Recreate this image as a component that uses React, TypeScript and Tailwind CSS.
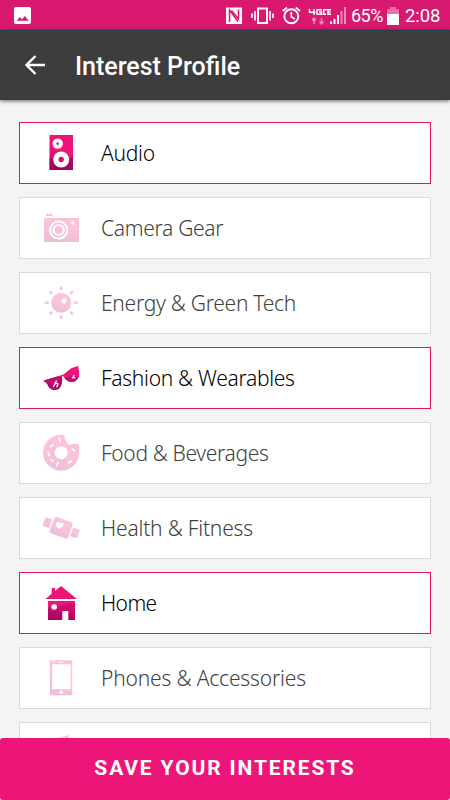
import type { ReactNode } from 'react';

type Interest = {
  name: string;
  icon: ReactNode;
  selected?: boolean;
  tracking?: string;
};

const fill = 'url(#pink)';

const AudioIcon = (
  <>
    <path fill={fill} d="M8.500 2h23.500v35H8.500z" />
    <path fill="#8f0055" opacity=".55" d="M8.500 25L20 29L32 24v13H8.500z" />
    <circle cx="16.700" cy="10.600" r="5.200" fill="#fff" />
    <path fill="#ed1578" d="M16.200 9h1v1.200h1.200v1h-1.200v1.200h-1v-1.200H15v-1h1.200z" />
    <circle cx="20.200" cy="26.500" r="8" fill="#fff" />
    <circle cx="20.200" cy="26.500" r="2.700" fill="#d40f70" />
  </>
);

const CameraIcon = (
  <>
    <path fill={fill} d="M5 5.700h6.500v2.200H5zM3 10h35v24H3z" />
    <circle cx="17.700" cy="22" r="8.600" fill="none" stroke="#fff" strokeWidth="2" />
    <circle cx="17.700" cy="22" r="5" fill="none" stroke="#fff" strokeWidth="2.200" />
    <circle cx="31.900" cy="15" r="1.700" fill="#fff" />
  </>
);

const EnergyIcon = (
  <>
    <circle cx="20.200" cy="19.700" r="10" fill={fill} />
    <circle cx="23" cy="18" r="2.500" fill="#fff" />
    <circle cx="25.200" cy="15.800" r=".8" fill="#fff" />
    <g fill="none" stroke="#ed1578" strokeWidth="2.600" strokeLinecap="round">
      <path d="M20.200 4.300v1.800M20.200 33.300v1.800M4.800 19.700h1.800M33.800 19.700h1.800" />
      <path d="M9.300 8.800l1.200 1.200M29.900 29.400l1.200 1.200M9.300 30.600l1.200-1.200M29.900 10l1.200-1.200" />
    </g>
  </>
);

const FashionIcon = (
  <>
    <path fill="#b4006b" d="M2.500 22.500L17 18.300C18.300 18 19.500 17.800 20.800 17.500C21.500 22 21.300 27.500 18.600 30.200C15.500 32.800 11.500 32.500 8.800 30.200C7 28.500 6.800 26.500 5.500 25.200C4.500 24.300 3 24 2.500 22.500Z" />
    <path fill="#d00f74" d="M4 22L17 18.300C18.300 18 19.500 17.800 20.800 17.500L21 20.500L7 26C6.500 25 4 24 4 22Z" opacity=".6" />
    <path fill="#ed1578" d="M19 17.600C23.500 17 25.500 13.500 29 11.300C31.500 9.600 34.500 8.700 37.300 7.800C36.800 10 38.300 12.300 38.300 15C38.300 19.500 35.800 23.500 31.500 24C27.500 24.300 24.500 22 22.800 18.700C21.500 17.800 20.500 18.500 19.500 19.500Z" />
    <path fill="#c60b72" d="M23.200 19.500L38 17.500C36.800 21.500 34.500 23.700 31.500 24C28.300 24.300 25.200 22.700 23.200 19.500Z" />
    <path d="M15.600 22.500L12.200 29M13.500 26.500c2-1.800 4-1.400 3.200.4l-1 2.300M33.200 17l-1.400 2.800M31 20.200l1.800-.8 1.700.6" fill="none" stroke="#fff" strokeWidth="1.300" />
  </>
);

const FoodIcon = (
  <>
    <path fill={fill} d="M23.700 2A18 18 0 1 0 38 17.500C38.300 15.500 38.100 13.500 37.600 11.500C35.500 10.300 34 10.300 32 11C30.500 11.900 28.500 12 27.300 11.300C26.300 10.700 26.400 9.500 25.600 8.700C24 7.200 23.200 4.800 23.700 2Z" />
    <circle cx="20.200" cy="19.700" r="6.500" fill="#fff" />
    <path d="M18.300 5.500l.8 3M9.500 13.600l2.600-1.600M7 19.500l1.200 2.900M9.700 26.500l2.200 1.600M17 29.500l-1.200 3M27.500 29.700l2.700-1.700M31.200 15.800l2.300 1.900" fill="none" stroke="#fff" strokeWidth="1.700" strokeLinecap="round" />
  </>
);

const HealthIcon = (
  <>
    <g fill={fill} transform="translate(20.200 19.800) rotate(20)">
      <rect x="-9.800" y="-8.700" width="19.600" height="17.400" rx="2.800" />
      <rect x="-18.300" y="-4.700" width="7" height="9" rx=".6" />
      <rect x="11.300" y="-4.400" width="7" height="9" rx=".6" />
    </g>
    <path fill="#fff" d="M17.800 20.800C15.600 19.500 14.300 17.200 15.100 15.300C16 13.500 18.100 13.600 18.900 15.400C20.500 14.100 22.500 14.800 22.500 16.600C22.300 18.800 20 20.200 17.800 20.800Z" />
  </>
);

const HomeIcon = (
  <>
    <path fill="#ed1578" d="M4.500 16L10.700 10.800V5H14v3L20 3L36 16Z" />
    <path fill={fill} d="M7 18h27v19H7z" />
    <path fill="#8f0055" opacity=".35" d="M7 25L34 20v17H7z" />
    <circle cx="13.200" cy="24" r="2.800" fill="#fff" />
    <path fill="#fff" d="M21.300 28h6v9.500h-6z" />
  </>
);

const PhoneIcon = (
  <>
    <rect x="9" y="2.300" width="22.300" height="35" rx=".5" fill={fill} />
    <path fill="#fff" d="M11.200 6.200h18.600v25H11.200zM18 3.700h4v1h-4zM12 3.500h1.400v1.400H12z" />
    <circle cx="20.100" cy="34.300" r="1.700" fill="#fff" />
  </>
);

const interests: Interest[] = [
  { name: 'Audio', icon: AudioIcon, selected: true, tracking: 'tracking-[-0.25px]' },
  { name: 'Camera Gear', icon: CameraIcon, tracking: 'tracking-[-0.3px]' },
  { name: 'Energy & Green Tech', icon: EnergyIcon, tracking: 'tracking-[-0.27px]' },
  { name: 'Fashion & Wearables', icon: FashionIcon, selected: true, tracking: 'tracking-[-0.3px]' },
  { name: 'Food & Beverages', icon: FoodIcon, tracking: 'tracking-[-0.34px]' },
  { name: 'Health & Fitness', icon: HealthIcon, tracking: 'tracking-[-0.2px]' },
  { name: 'Home', icon: HomeIcon, selected: true, tracking: 'tracking-[-0.6px]' },
  { name: 'Phones & Accessories', icon: PhoneIcon, tracking: 'tracking-[-0.17px]' },
  { name: '', icon: <path fill={fill} d="M17 5L27.500 2v18H17z" /> },
];

function InterestCard({ name, icon, selected, tracking }: Interest) {
  return (
    <button
      className={`flex h-[62px] w-full shrink-0 items-center border bg-white pl-[21px] text-left ${
        selected ? 'border-[#df1564]' : 'border-[#d9d9d9]'
      }`}
    >
      <svg viewBox="0 0 40 40" className={`size-10 shrink-0 ${selected ? '' : 'opacity-25'}`}>
        {icon}
      </svg>
      <span
        className={`ml-5 whitespace-nowrap text-[21px] leading-none font-[350] ${tracking ?? ''} ${
          selected ? 'text-black' : 'text-[#404040]'
        }`}
      >
        {name}
      </span>
    </button>
  );
}

function StatusBar() {
  return (
    <div className="flex h-[30px] shrink-0 items-center bg-[#d9186f] font-[Roboto,sans-serif] text-white">
      <svg viewBox="0 0 18 18" className="mt-px ml-3.5 size-[17px]" fill="#fff">
        <path fillRule="evenodd" d="M2 0h14a2 2 0 0 1 2 2v14a2 2 0 0 1-2 2H2a2 2 0 0 1-2-2V2a2 2 0 0 1 2-2ZM3 14.500h12.500L11.500 9.500L8.500 13L6 10.500Z" />
      </svg>
      <svg width="126" height="30" viewBox="222 0 126 30" className="ml-[191px]" fill="none" stroke="#fff">
        {/* nfc */}
        <path fill="#fff" stroke="none" d="M226 7.500h16v16.500h-16z" />
        <path stroke="#d9186f" strokeWidth="1.500" d="M229.500 22V10l8.500 11.500M231.500 10.500L238.500 19V9.500" />
        {/* vibrate */}
        <path strokeWidth="2" d="M258 8.500h9v14.500h-9z" />
        <path strokeWidth="1.700" d="M255 11v9.500M252 13.500v4.500M270 11v9.500M273 13.500v4.500" />
        {/* alarm */}
        <circle cx="291.300" cy="16.300" r="7" strokeWidth="1.900" />
        <path strokeWidth="1.700" d="M291.300 12v4.700l3.500 2.300M282.700 11l4.300-3.500M300 11l-4.300-3.500" />
        {/* 4G LTE */}
        <path strokeWidth="1.500" d="M309.500 9v3.200h6M314 9v6M322 9.700h-5v4.600h4.500v-2.300h-2.500M323.700 9v5.300h2.300M327.500 9.700h-3M331 9.700h-3v4.600h3M328 12h2.500" />
        <path stroke="#ef8bba" strokeWidth="1.500" d="M314 24v-5M312 20.500l2-2.500 2 2.500M321.500 18v5M319.500 21.500l2 2.500 2-2.500" />
        {/* signal */}
        <path strokeWidth="2" d="M331 24v-2.500M334.500 24v-5M338 24V15" />
        <path stroke="#ef8bba" strokeWidth="2" d="M341.500 24V11M345 24V7" />
      </svg>
      <span className="mt-0.5 ml-[3px] w-[35px] whitespace-nowrap text-[18px] leading-none tracking-[-0.5px]">65%</span>
      <svg width="12" height="18" viewBox="0 0 12 18" className="mt-px ml-px">
        <path fill="#ef6ea8" d="M3 0h6v2h3v5H0V2h3z" />
        <path fill="#fff" d="M0 7h12v11H0z" />
      </svg>
      <span className="mt-0.5 ml-1.5 whitespace-nowrap text-[18.500px] leading-none tracking-[-0.1px]">2:08</span>
    </div>
  );
}

export default function App() {
  return (
    <div className="flex h-screen w-full flex-col overflow-hidden bg-[#f4f4f4] font-['Noto_Sans',sans-serif]">
      {/* Shared icon gradient */}
      <svg className="size-0 shrink-0 self-start">
        <defs>
          <linearGradient id="pink" x1=".6" y1="0" x2=".4" y2="1">
            <stop offset=".45" stopColor="#ed1578" />
            <stop offset="1" stopColor="#b4006b" />
          </linearGradient>
        </defs>
      </svg>

      <StatusBar />

      {/* Header */}
      <header className="z-10 flex h-[70px] shrink-0 items-center border-t border-[#234047] bg-[#3d3d3d] text-white shadow-[0_1px_4px_rgba(0,0,0,0.6)]">
        <svg viewBox="0 0 20 20" className="mb-px ml-[25px] size-5" fill="none" stroke="#fff" strokeWidth="2.300">
          <path d="M20 10H2M10.500 1L1.500 10l9 9" />
        </svg>
        <h1 className="mt-0.5 ml-[30px] whitespace-nowrap font-[Roboto,sans-serif] text-[25px] leading-none font-medium">Interest Profile</h1>
      </header>

      {/* Interests */}
      <main className="flex min-h-0 flex-1 flex-col gap-[13px] overflow-hidden px-[19px] pt-[22px]">
        {interests.map((interest) => (
          <InterestCard key={interest.name} {...interest} />
        ))}
      </main>

      {/* Save */}
      <button className="h-[62px] shrink-0 rounded-[3px] bg-[#ed1578] pb-0.5 font-[Roboto,sans-serif] text-[21px] leading-none font-bold tracking-[1.850px] text-white">
        SAVE YOUR INTERESTS
      </button>
    </div>
  );
}
